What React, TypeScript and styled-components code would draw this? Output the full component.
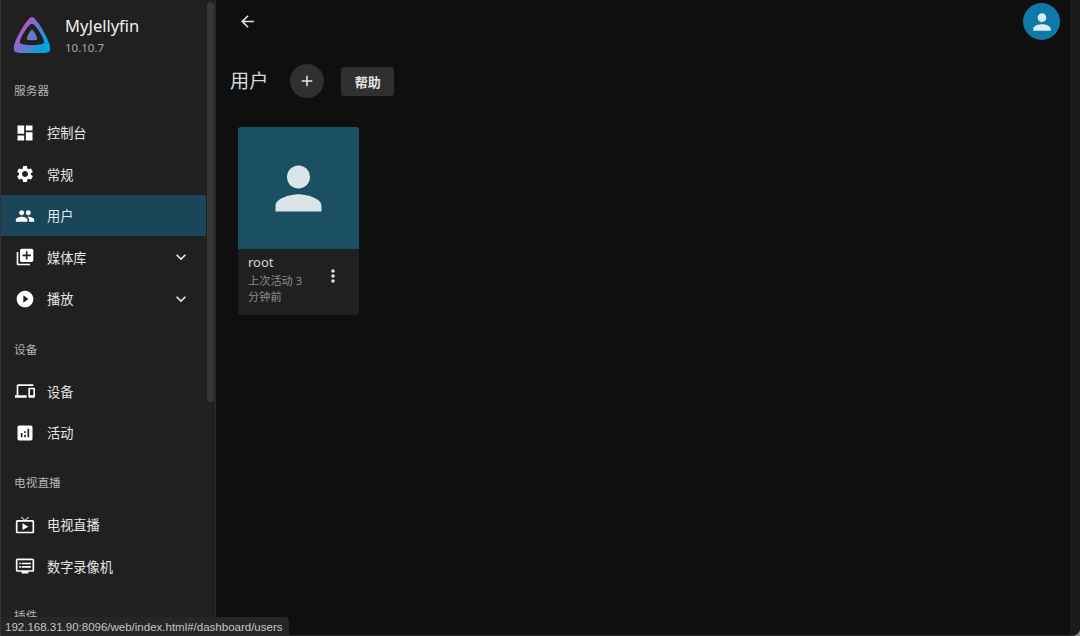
import React from "react";
import styled, { createGlobalStyle } from "styled-components";

const Global = createGlobalStyle`
  html, body { margin: 0; padding: 0; background: #8a8a8a; }
  #root { width: 1080px; height: 636px; overflow: hidden; }
  * { box-sizing: border-box; }
`;

const FONT = `"Noto Sans", "Noto Sans CJK SC", sans-serif`;

const P = {
  dashboard: "M3 13h8V3H3v10zm0 8h8v-6H3v6zm10 0h8V11h-8v10zm0-18v6h8V3h-8z",
  settings:
    "M19.14 12.94c.04-.3.06-.61.06-.94 0-.32-.02-.64-.07-.94l2.03-1.58c.18-.14.23-.41.12-.61l-1.92-3.32c-.12-.22-.37-.29-.59-.22l-2.39.96c-.5-.38-1.03-.7-1.62-.94l-.36-2.54c-.04-.24-.24-.41-.48-.41h-3.84c-.24 0-.43.17-.47.41l-.36 2.54c-.59.24-1.13.57-1.62.94l-2.39-.96c-.22-.08-.47 0-.59.22L2.74 8.87c-.12.21-.08.47.12.61l2.03 1.58c-.05.3-.09.63-.09.94s.02.64.07.94l-2.03 1.58c-.18.14-.23.41-.12.61l1.92 3.32c.12.22.37.29.59.22l2.39-.96c.5.38 1.03.7 1.62.94l.36 2.54c.05.24.24.41.48.41h3.84c.24 0 .44-.17.47-.41l.36-2.54c.59-.24 1.13-.56 1.62-.94l2.39.96c.22.08.47 0 .59-.22l1.92-3.32c.12-.22.07-.47-.12-.61l-2.01-1.58zM12 15.6c-1.98 0-3.6-1.62-3.6-3.6s1.62-3.6 3.6-3.6 3.6 1.62 3.6 3.6-1.62 3.6-3.6 3.6z",
  people:
    "M16 11c1.66 0 2.99-1.34 2.99-3S17.66 5 16 5c-1.66 0-3 1.34-3 3s1.34 3 3 3zm-8 0c1.66 0 2.99-1.34 2.99-3S9.66 5 8 5C6.34 5 5 6.34 5 8s1.34 3 3 3zm0 2c-2.33 0-7 1.17-7 3.5V19h14v-2.5c0-2.33-4.67-3.5-7-3.5zm8 0c-.29 0-.62.02-.97.05 1.16.84 1.97 1.97 1.97 3.45V19h6v-2.5c0-2.33-4.67-3.5-7-3.5z",
  libraryAdd:
    "M4 6H2v14c0 1.1.9 2 2 2h14v-2H4V6zm16-4H8c-1.1 0-2 .9-2 2v12c0 1.1.9 2 2 2h12c1.1 0 2-.9 2-2V4c0-1.1-.9-2-2-2zm-1 9h-4v4h-2v-4H9V9h4V5h2v4h4v2z",
  play: "M12 2C6.48 2 2 6.48 2 12s4.48 10 10 10 10-4.48 10-10S17.52 2 12 2zm-2 14.5v-9l6 4.5-6 4.5z",
  devices:
    "M4 6h18V4H4c-1.1 0-2 .9-2 2v11H0v3h14v-3H4V6zm19 2h-6c-.55 0-1 .45-1 1v10c0 .55.45 1 1 1h6c.55 0 1-.45 1-1V9c0-.55-.45-1-1-1zm-1 9h-4v-7h4v7z",
  analytics:
    "M19 3H5c-1.1 0-2 .9-2 2v14c0 1.1.9 2 2 2h14c1.1 0 2-.9 2-2V5c0-1.1-.9-2-2-2zM9 17H7v-5h2v5zm4 0h-2v-3h2v3zm0-5h-2v-2h2v2zm4 5h-2V7h2v10z",
  liveTv:
    "M21 6h-7.59l3.29-3.29L16 2l-4 4-4-4-.71.71L10.59 6H3c-1.1 0-2 .89-2 2v12c0 1.1.9 2 2 2h18c1.1 0 2-.9 2-2V8c0-1.11-.9-2-2-2zm0 14H3V8h18v12zM9 10v8l7-4z",
  dvr: "M21 3H3c-1.1 0-2 .9-2 2v12c0 1.1.9 2 2 2h5v2h8v-2h5c1.1 0 1.99-.9 1.99-2L23 5c0-1.1-.9-2-2-2zm0 14H3V5h18v12zm-2-9H8v2h11V8zm0 4H8v2h11v-2zM7 8H5v2h2V8zm0 4H5v2h2v-2z",
  person:
    "M12 12c2.21 0 4-1.79 4-4s-1.79-4-4-4-4 1.79-4 4 1.79 4 4 4zm0 2c-2.67 0-8 1.34-8 4v2h16v-2c0-2.66-5.33-4-8-4z",
  expand: "M16.59 8.59 12 13.17 7.41 8.59 6 10l6 6 6-6z",
  back: "M20 11H7.83l5.59-5.59L12 4l-8 8 8 8 1.41-1.41L7.83 13H20v-2z",
  add: "M19 13h-6v6h-2v-6H5v-2h6V5h2v6h6v2z",
  more: "M12 8c1.1 0 2-.9 2-2s-.9-2-2-2-2 .9-2 2 .9 2 2 2zm0 2c-1.1 0-2 .9-2 2s.9 2 2 2 2-.9 2-2-.9-2-2-2zm0 6c-1.1 0-2 .9-2 2s.9 2 2 2 2-.9 2-2-.9-2-2-2z",
};

const Icon = ({ d, size = 24, color = "currentColor" }: { d: string; size?: number; color?: string }) => (
  <svg width={size} height={size} viewBox="0 0 24 24" fill={color} style={{ flex: "none", display: "block" }}>
    <path d={d} />
  </svg>
);

const Logo = () => (
  <svg width="36" height="36" viewBox="0 0 512 512" style={{ display: "block", flex: "none" }}>
    <defs>
      <linearGradient id="jf" gradientUnits="userSpaceOnUse" x1="110" y1="200" x2="440" y2="400">
        <stop offset="0" stopColor="#aa5cc3" />
        <stop offset="1" stopColor="#00a4dc" />
      </linearGradient>
    </defs>
    <path
      fill="url(#jf)"
      transform="translate(256 265) scale(1.7) translate(-256 -245)"
      d="M256 196.2c-11.4 0-48.3 66.9-42.7 78.1s79.9 11.2 85.5 0c5.6-11.2-31.3-78.1-42.8-78.1z"
    />
    <path
      fill="url(#jf)"
      fillRule="evenodd"
      d="M256 0C186.1 0-39.1 408.1-4.9 476.8s487.6 68 521.8 0C551.1 408.8 325.9 0 256 0zm170.2 367.3c-22.4 44.9-318 45.4-340.4 0S209.6 94.3 256 94.3c46.4 0 192.6 228.1 170.2 273z"
    />
  </svg>
);

const Frame = styled.div`
  position: relative;
  width: 1080px;
  height: 636px;
  display: flex;
  overflow: hidden;
  background: #0f0f0f;
  border-left: 1px solid #333;
  border-bottom: 1px solid #2a2a2a;
  border-bottom-right-radius: 8px;
  font-family: ${FONT};
`;

const Sidebar = styled.aside`
  width: 215px;
  flex: none;
  display: flex;
  background: #202020;
  border-right: 1px solid #2c2c2c;
`;

const Nav = styled.nav`
  width: 205px;
  flex: none;
  overflow: hidden;
`;

const Brand = styled.div`
  display: flex;
  align-items: center;
  gap: 15px;
  height: 61.75px;
  padding: 9px 0 0 13px;
`;

const BrandText = styled.div`
  display: flex;
  flex-direction: column;
  gap: 5px;
  margin-top: 1px;
`;

const BrandName = styled.div`
  color: #f0f0f0;
  font-size: 16.5px;
  line-height: 20px;
`;

const BrandVersion = styled.div`
  color: #a8a8a8;
  font-size: 11.5px;
  line-height: 14px;
`;

const SectionTitle = styled.div<{ $height?: number; $top?: number }>`
  height: ${(p) => p.$height ?? 50}px;
  padding: ${(p) => p.$top ?? 20.5}px 0 0 13px;
  color: #b4b4b4;
  font-size: 11.7px;
  line-height: 17px;
`;

const Row = styled.div<{ $active?: boolean }>`
  height: 41.5px;
  display: flex;
  align-items: center;
  padding: 0 15px 0 14px;
  color: ${(p) => (p.$active ? "#dceff6" : "#e6e6e6")};
  background: ${(p) => (p.$active ? "#1b4559" : "transparent")};
  font-size: 13.2px;
`;

const RowIcon = styled.span`
  width: 20px;
  height: 20px;
  margin-right: 12px;
  color: #fff;
  display: flex;
  align-items: center;
  justify-content: center;
`;

const RowLabel = styled.span`
  flex: 1;
`;

const Track = styled.div`
  width: 9px;
  flex: none;
  background: #202020;
  padding: 2px 1px 0 1px;
`;

const Thumb = styled.div`
  height: 400px;
  border-radius: 4px;
  background: #383838;
`;

const Main = styled.main`
  flex: 1;
  min-width: 0;
  display: flex;
  flex-direction: column;
  background: #0f0f0f;
`;

const TopBar = styled.header`
  height: 43px;
  display: flex;
  align-items: center;
  justify-content: space-between;
  padding: 0 10px 0 22px;
  color: #e4e4e4;
`;

const Avatar = styled.div`
  width: 37px;
  height: 37px;
  border-radius: 50%;
  background: #0e7aa5;
  display: flex;
  align-items: center;
  justify-content: center;
`;

const TitleRow = styled.div`
  height: 34px;
  margin-top: 21px;
  padding-left: 14px;
  display: flex;
  align-items: center;
`;

const PageTitle = styled.h1`
  margin: -2px 22px 0 0;
  color: #d8d8d8;
  font-size: 19.2px;
  font-weight: 400;
`;

const RoundButton = styled.div`
  width: 34px;
  height: 34px;
  border-radius: 50%;
  background: #303030;
  color: #e8e8e8;
  display: flex;
  align-items: center;
  justify-content: center;
`;

const HelpButton = styled.div`
  width: 53px;
  height: 29px;
  margin-left: 17px;
  border-radius: 3px;
  background: #303030;
  color: #e4e4e4;
  font-size: 13px;
  font-weight: 700;
  display: flex;
  align-items: center;
  justify-content: center;
`;

const Card = styled.section`
  width: 121px;
  height: 188px;
  margin: 29px 0 0 22px;
  border-radius: 3px;
  overflow: hidden;
  background: #202020;
`;

const CardImage = styled.div`
  height: 122px;
  background: #1b5064;
  display: flex;
  align-items: center;
  justify-content: center;
`;

const CardFooter = styled.div`
  display: flex;
  padding: 5px 16px 0 10px;
`;

const CardText = styled.div`
  flex: 1;
  min-width: 0;
`;

const CardName = styled.div`
  color: #d6d6d6;
  font-size: 13px;
  line-height: 16px;
`;

const CardMeta = styled.div`
  color: #8c8c8c;
  font-size: 11.2px;
  line-height: 15.5px;
  margin-top: 3px;
  width: 62px;
`;

const CardMore = styled.div`
  color: #e8e8e8;
  margin-top: 12px;
`;

const ScrollStrip = styled.div`
  width: 10px;
  flex: none;
  background: #1a1a1a;
`;

const StatusBar = styled.div`
  position: absolute;
  left: -1px;
  bottom: -1px;
  height: 19px;
  padding: 0 7px 0 5px;
  background: #262626;
  border-top-right-radius: 4px;
  color: #c6c6c6;
  font-family: "Liberation Sans", Arial, sans-serif;
  font-size: 11.5px;
  line-height: 20px;
  white-space: nowrap;
`;

type Item = { label: string; icon: string; active?: boolean; chevron?: boolean };

const Section = ({ items }: { items: Item[] }) => (
  <>
    {items.map((it) => (
      <Row key={it.label} $active={it.active}>
        <RowIcon>
          <Icon d={it.icon} size={20} />
        </RowIcon>
        <RowLabel>{it.label}</RowLabel>
        {it.chevron && <Icon d={P.expand} size={20} color="#e8e8e8" />}
      </Row>
    ))}
  </>
);

export default function App() {
  return (
    <Frame>
      <Global />
      <Sidebar>
        <Nav>
          <Brand>
            <Logo />
            <BrandText>
              <BrandName>MyJellyfin</BrandName>
              <BrandVersion>10.10.7</BrandVersion>
            </BrandText>
          </Brand>
          <SectionTitle $top={20.25}>服务器</SectionTitle>
          <Section
            items={[
              { label: "控制台", icon: P.dashboard },
              { label: "常规", icon: P.settings },
              { label: "用户", icon: P.people, active: true },
              { label: "媒体库", icon: P.libraryAdd, chevron: true },
              { label: "播放", icon: P.play, chevron: true },
            ]}
          />
          <SectionTitle $height={51} $top={21.5}>设备</SectionTitle>
          <Section
            items={[
              { label: "设备", icon: P.devices },
              { label: "活动", icon: P.analytics },
            ]}
          />
          <SectionTitle $height={50.5}>电视直播</SectionTitle>
          <Section
            items={[
              { label: "电视直播", icon: P.liveTv },
              { label: "数字录像机", icon: P.dvr },
            ]}
          />
          <SectionTitle>插件</SectionTitle>
        </Nav>
        <Track>
          <Thumb />
        </Track>
      </Sidebar>
      <Main>
        <TopBar>
          <Icon d={P.back} size={19} />
          <Avatar>
            <Icon d={P.person} size={26} color="#d9edf5" />
          </Avatar>
        </TopBar>
        <TitleRow>
          <PageTitle>用户</PageTitle>
          <RoundButton>
            <Icon d={P.add} size={18} />
          </RoundButton>
          <HelpButton>帮助</HelpButton>
        </TitleRow>
        <Card>
          <CardImage>
            <Icon d={P.person} size={69} color="#dbe5e9" />
          </CardImage>
          <CardFooter>
            <CardText>
              <CardName>root</CardName>
              <CardMeta>上次活动 3 分钟前</CardMeta>
            </CardText>
            <CardMore>
              <Icon d={P.more} size={20} />
            </CardMore>
          </CardFooter>
        </Card>
      </Main>
      <ScrollStrip />
      <StatusBar>192.168.31.90:8096/web/index.html#/dashboard/users</StatusBar>
    </Frame>
  );
}
